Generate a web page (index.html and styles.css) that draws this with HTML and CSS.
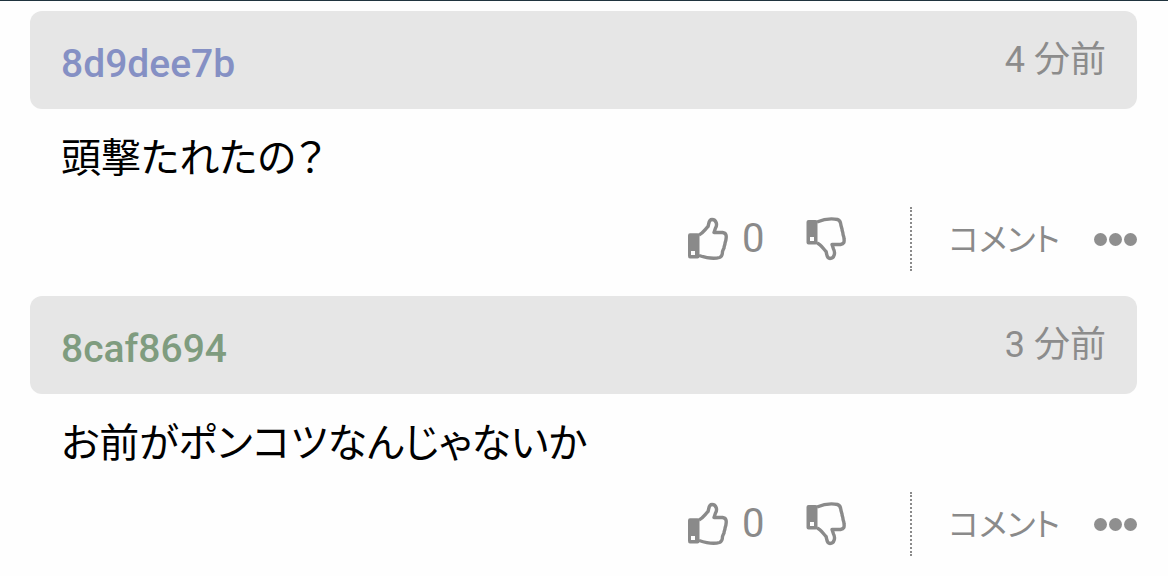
FILE: index.html
```html
<!DOCTYPE html>
<html lang="ja">
<head>
<meta charset="utf-8">
<meta name="viewport" content="width=device-width, initial-scale=1">
<title>コメント</title>
<link rel="stylesheet" href="styles.css">
</head>
<body>
<svg class="sprite" aria-hidden="true">
  <symbol id="thumb-up" viewBox="0 0 40 44">
    <path d="M0 18.500Q0 16.300 2 16.300H9.500Q11.500 16.300 11.500 18.500V39Q11.500 41.500 9.500 41.500H2Q0 41.500 0 39ZM3 34V38H7V34Z" fill="currentColor" fill-rule="evenodd"/>
    <path d="M11 18C15 16 17 12.500 20 9.500C21 7 20.500 2.500 24 2.500C28.500 2.500 29.500 8 27.500 11L26 15.500H34.500C38.500 16 38.500 19 38 22C38 24 37 25 37 26.500C37 28 36 29 36 31C35.500 32 35 33 34.500 34.500C34.500 37 34 39.500 31.500 40.500C25 42.500 17 40.500 11 38.500" fill="none" stroke="currentColor" stroke-width="3.400" stroke-linejoin="round"/>
  </symbol>
  <symbol id="thumb-down" viewBox="0 0 40 44">
    <path d="M0.500 5Q0.500 3 2.500 3H9.500Q11.500 3 11.500 5V25.500Q11.500 27.500 9.500 27.500H2.500Q0.500 27.500 0.500 25.500ZM4 20V24H8V20Z" fill="currentColor" fill-rule="evenodd"/>
    <path d="M11 5C17 2.500 25 1.200 31.500 2.500C34 3.200 34.800 6 35 8.500C35.500 10 35.500 11 36 12C36 14 37 15 37 17C37 18.500 38 19.500 38 21.500C38.500 25 38 27 34.500 27.500H26L27.500 32C29.500 35.500 28.500 41.500 24 41.500C20.500 41.500 21 37 20 34.500C17 31.500 15 27.500 11 26" fill="none" stroke="currentColor" stroke-width="3.400" stroke-linejoin="round"/>
  </symbol>
</svg>
<main class="thread">
  <article class="post">
    <header class="post-head">
      <a class="author author-blue" href="#">8d9dee7b</a>
      <time class="time">4 分前</time>
    </header>
    <p class="message">頭撃たれたの？</p>
    <footer class="actions">
      <button class="vote up" type="button" aria-label="いいね"><svg class="thumb"><use href="#thumb-up"/></svg><span class="count">0</span></button>
      <button class="vote down" type="button" aria-label="よくないね"><svg class="thumb"><use href="#thumb-down"/></svg></button>
      <button class="reply" type="button">コメント</button>
      <button class="more" type="button" aria-label="その他"><span class="dot"></span><span class="dot"></span><span class="dot"></span></button>
    </footer>
  </article>
  <article class="post">
    <header class="post-head">
      <a class="author author-green" href="#">8caf8694</a>
      <time class="time">3 分前</time>
    </header>
    <p class="message">お前がポンコツなんじゃないか</p>
    <footer class="actions">
      <button class="vote up" type="button" aria-label="いいね"><svg class="thumb"><use href="#thumb-up"/></svg><span class="count">0</span></button>
      <button class="vote down" type="button" aria-label="よくないね"><svg class="thumb"><use href="#thumb-down"/></svg></button>
      <button class="reply" type="button">コメント</button>
      <button class="more" type="button" aria-label="その他"><span class="dot"></span><span class="dot"></span><span class="dot"></span></button>
    </footer>
  </article>
</main>
</body>
</html>
```
FILE: styles.css
```css
* {
  box-sizing: border-box;
}

body {
  margin: 0;
  border-top: 1px solid #1f333e;
  background: #fefefe;
  color: #000;
  font-family: Roboto, "Noto Sans CJK JP", sans-serif;
}

.sprite {
  display: none;
}

.thread {
  display: flex;
  flex-direction: column;
  gap: 24px;
  padding: 10px 31px 0 30px;
}

.post-head {
  display: flex;
  justify-content: space-between;
  align-items: center;
  padding: 16px 31px;
  border-radius: 12px;
  background: #e6e6e6;
}

.author {
  padding-top: 8px;
  font-size: 39px;
  font-weight: 500;
  line-height: 58px;
  text-decoration: none;
}

.author-blue {
  color: #8590c4;
}

.author-green {
  color: #7f9c7f;
}

.time {
  color: #8c8c8c;
  font-size: 36px;
  line-height: 66px;
}

.message {
  margin: 0;
  padding: 20px 31px 0;
  font-size: 40px;
  font-feature-settings: "palt";
  line-height: 60px;
}

.actions {
  display: flex;
  justify-content: flex-end;
  align-items: center;
  margin-top: 18px;
}

button {
  display: flex;
  align-items: center;
  padding: 0;
  border: 0;
  background: none;
  color: #8a8a8a;
  font: inherit;
  cursor: pointer;
}

.thumb {
  width: 40px;
  height: 44px;
}

.up {
  gap: 14px;
  margin-right: 41px;
}

.count {
  font-size: 40px;
  line-height: 44px;
}

.down {
  margin-right: 64px;
}

.reply {
  height: 64px;
  padding: 0 0 4px 37px;
  border-left: 2px dotted #8a8a8a;
  font-size: 32px;
  font-feature-settings: "palt";
}

.more {
  gap: 2px;
  margin-left: 34px;
}

.dot {
  width: 13px;
  height: 13px;
  border-radius: 50%;
  background: #8f8f8f;
}

.post + .post {
  margin-top: 1px;
}
```
